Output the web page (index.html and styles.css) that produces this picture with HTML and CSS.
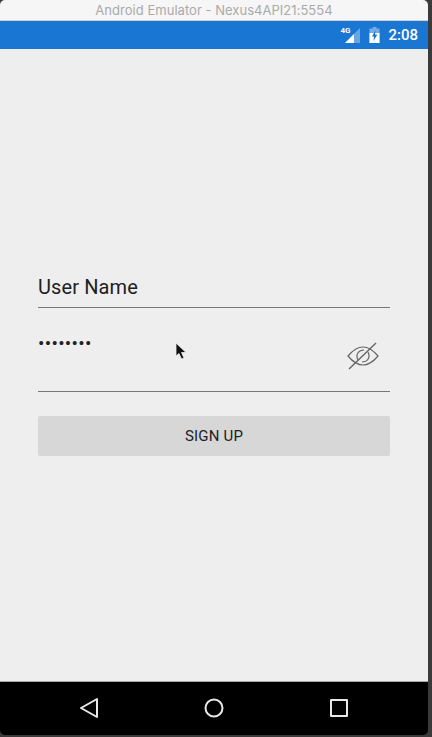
FILE: index.html
```html
<!DOCTYPE html>
<html lang="en">
<head>
    <meta charset="UTF-8">
    <title>Android Emulator - Nexus4API21:5554</title>
    <link rel="stylesheet" href="styles.css">
</head>
<body>
    <div class="window">
        <div class="title-bar">Android Emulator - Nexus4API21:5554</div>

        <div class="status-bar">
            <span class="net">4G</span>
            <svg class="signal" width="15" height="15" viewBox="0 0 15 15">
                <path d="M15 0V15H0Z" fill="#fff" opacity="0.35"/>
                <path d="M9 6V15H0Z" fill="#fff"/>
            </svg>
            <svg class="battery" width="11" height="16" viewBox="0 0 10 16">
                <path d="M3 0H7V1.500H10V16H0V1.500H3Z" fill="#fff" opacity="0.4"/>
                <path d="M0 6H10V16H0Z" fill="#fff"/>
                <path d="M6 3L2.500 9.500H4.500L4 14L7.800 7.500H5.500Z" fill="#1976d2"/>
            </svg>
            <span class="clock">2:08</span>
        </div>

        <main class="content">
            <div class="field username">User Name</div>
            <div class="field password">
                <span class="dots">••••••••</span>
                <svg class="eye" width="34" height="30" viewBox="0 0 34 30" fill="none" stroke="#666" stroke-width="1.200">
                    <path d="M2 15C7 9 12 6 17 6C22 6 27 9 32 15C27 21 22 24 17 24C12 24 7 21 2 15Z"/>
                    <path d="M12 19C9 13 13 9 18 9"/>
                    <path d="M22 11C25 17 21 21 16 21"/>
                    <path d="M3 28L30 2" stroke-width="1.400"/>
                </svg>
            </div>
            <button class="sign-up">SIGN UP</button>

            <svg class="cursor" width="13" height="18" viewBox="0 0 13 18">
                <path d="M1 1V14L4 11.500L6.500 17L9 16L6.500 10.500H11Z" fill="#111" stroke="#eee" stroke-width="0.800"/>
            </svg>
        </main>

        <nav class="nav-bar">
            <svg width="20" height="22" viewBox="0 0 20 22" fill="none" stroke="#e8e8e8" stroke-width="2" stroke-linejoin="round">
                <path d="M18 2V20L2 11Z"/>
            </svg>
            <svg class="home" width="20" height="20" viewBox="0 0 20 20" fill="none" stroke="#e8e8e8" stroke-width="2">
                <circle cx="10" cy="10" r="8.500"/>
            </svg>
            <svg width="18" height="18" viewBox="0 0 18 18" fill="none" stroke="#e8e8e8" stroke-width="2" stroke-linejoin="round">
                <rect x="1" y="1" width="16" height="16"/>
            </svg>
        </nav>
    </div>
</body>
</html>
```

FILE: styles.css
```css
html, body {
    margin: 0;
    height: 100%;
    overflow: hidden;
}

body {
    background-color: #3a3a3a;
    font-family: 'Roboto', sans-serif;
}

.window {
    width: 428px;
    height: 735px;
    display: flex;
    flex-direction: column;
    border-radius: 5px;
    overflow: hidden;
}

.title-bar {
    height: 20px;
    line-height: 21px;
    flex-shrink: 0;
    background-color: #f6f6f6;
    border-bottom: 1px solid #cfcfcf;
    color: #aaaaaa;
    font-family: 'Inter', sans-serif;
    font-size: 13px;
    letter-spacing: 0.03px;
    text-align: center;
}

.status-bar {
    height: 28px;
    flex-shrink: 0;
    display: flex;
    align-items: center;
    justify-content: flex-end;
    padding-right: 10px;
    background-color: #1976d2;
    color: #fff;
}

.net {
    align-self: flex-start;
    margin-top: 5px;
    margin-right: -5px;
    font-size: 8px;
    font-weight: 700;
}

.signal {
    margin-right: 9px;
}

.battery {
    margin-right: 8px;
}

.clock {
    font-size: 15px;
    font-weight: 500;
}

.content {
    position: relative;
    flex: 1;
    padding: 225px 38px 0;
    background-color: #eeeeee;
    border-bottom: 1px solid #a8a8a8;
}

.field {
    border-bottom: 1px solid #777;
    color: #212121;
}

.username {
    height: 33px;
    font-size: 20px;
    line-height: 27px;
    letter-spacing: 0.12px;
}

.password {
    display: flex;
    justify-content: space-between;
    height: 75px;
    margin-top: 8px;
}

.dots {
    font-size: 19px;
    line-height: 20px;
    margin-top: 18px;
    letter-spacing: 0.3px;
}

.eye {
    margin-top: 25px;
    margin-right: 10px;
}

.sign-up {
    display: block;
    width: 100%;
    height: 40px;
    margin-top: 24px;
    border: none;
    border-radius: 2px;
    background-color: #d7d7d7;
    color: #212121;
    font-family: 'Roboto', sans-serif;
    font-size: 15px;
    font-weight: 400;
    letter-spacing: 0.2px;
}

.cursor {
    position: absolute;
    left: 175px;
    top: 293px;
}

.nav-bar {
    height: 53px;
    flex-shrink: 0;
    display: flex;
    align-items: center;
    justify-content: space-between;
    padding: 0 80px 1px 79px;
    box-sizing: border-box;
    background-color: #000;
}

.home {
    margin-right: 2px;
}
```
